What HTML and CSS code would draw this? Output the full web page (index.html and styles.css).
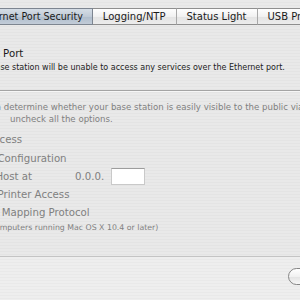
FILE: index.html
```html
<!DOCTYPE html>
<html lang="en">
<head>
  <meta charset="UTF-8">
  <meta name="viewport" content="width=device-width, initial-scale=1.0">
  <title>Base Station Settings</title>
  <link rel="stylesheet" href="styles.css">
</head>
<body>
  <div class="window">
    <div class="tabbar">
      <div class="tab tab-first selected">Ethernet Port Security</div>
      <div class="tab">Logging/NTP</div>
      <div class="tab">Status Light</div>
      <div class="tab">USB Printer</div>
    </div>

    <div class="panel">
      <section class="port">
        <h2 class="port-title">Ethernet Port</h2>
        <p class="note port-note">The base station will be unable to access any services over the Ethernet port.</p>
      </section>

      <div class="divider"></div>

      <section class="privacy disabled">
        <p class="note privacy-note">
          <span class="line">You can determine whether your base station is easily visible to the public via the Internet,</span>
          <span class="line line-cont">uncheck all the options.</span>
        </p>
        <ul class="options">
          <li class="option"><span class="check"></span><span class="label">Enable SNMP Access</span></li>
          <li class="option"><span class="check"></span><span class="label">Enable Remote Configuration</span></li>
          <li class="option"><span class="check"></span><span class="label">Enable Default Host at</span><span class="ip">0.0.0.</span><input class="field" type="text" disabled></li>
          <li class="option"><span class="check"></span><span class="label">Enable Remote Printer Access</span></li>
          <li class="option"><span class="check"></span><span class="label">Enable NAT Port Mapping Protocol</span></li>
        </ul>
        <p class="note mac-note">(Only for computers running Mac OS X 10.4 or later)</p>
      </section>
    </div>

    <div class="footer">
      <button class="push" type="button">Revert</button>
      <button class="push" type="button">Update</button>
    </div>
  </div>
</body>
</html>
```

FILE: styles.css
```css
:root {
  --stripe-light: #e9e9e9;
  --stripe-dark: #e4e4e4;
  --text: #1a1a1a;
  --text-disabled: #808080;
  --ui-font: "Lucida Grande", "DejaVu Sans", sans-serif;
}

body {
  margin: 0;
  font-family: var(--ui-font);
  color: var(--text);
}

.window {
  width: 300px;
  height: 300px;
  overflow: hidden;
  display: flex;
  flex-direction: column;
  background: repeating-linear-gradient(to bottom, var(--stripe-light) 0 2px, var(--stripe-dark) 2px 3px);
}

/* tabs */
.tabbar {
  display: flex;
  margin-top: 8px;
  margin-left: -32px;
  height: 17px;
  flex-shrink: 0;
}

.tab {
  box-sizing: border-box;
  height: 17px;
  padding: 0 10px;
  font-size: 10px;
  line-height: 15px;
  white-space: nowrap;
  border-top: 1px solid #8e8e8e;
  border-bottom: 1px solid #8e8e8e;
  border-right: 1px solid #a8a8a8;
  background: linear-gradient(to bottom, #fefefe, #f1f1f1 50%, #e3e3e3 51%, #ececec);
}

.tab-first {
  padding: 0 9px;
  font-size: 9.6px;
}

.tab.selected {
  background: linear-gradient(to bottom, #d5dde6, #c0cad6 50%, #aebccb 51%, #c2ccd8);
  border-color: #7d8590;
}

/* panel */
.panel {
  height: 232px;
  box-sizing: border-box;
  padding-top: 20.5px;
  border-bottom: 1px solid #c4c4c4;
  flex-shrink: 0;
}

.port-title {
  margin: 0 0 0 -44px;
  font-size: 10.2px;
  font-weight: normal;
  line-height: 16px;
  white-space: nowrap;
}

.note {
  margin: 0;
  font-size: 8px;
  line-height: 12px;
  white-space: nowrap;
}

.port-note {
  margin-left: -27px;
  color: #222;
}

.divider {
  margin-top: 16.5px;
  border-top: 1px solid #a4a4a4;
  border-bottom: 1px solid #f6f6f6;
}

.disabled {
  color: var(--text-disabled);
}

.privacy-note {
  margin-top: 9.3px;
  margin-left: -32px;
  font-size: 8.6px;
}

.privacy-note .line {
  display: block;
}

.privacy-note .line-cont {
  margin-left: 42px;
}

.options {
  list-style: none;
  margin: 5.5px 0 0 -102px;
  padding: 0;
}

.option {
  display: flex;
  align-items: center;
  height: 18.25px;
  font-size: 10.2px;
  white-space: nowrap;
}

.check {
  width: 12px;
  height: 12px;
  margin-right: 7px;
  box-sizing: border-box;
  border: 1px solid #b0b0b0;
  border-radius: 2px;
  background: #f7f7f7;
}

.ip {
  margin-left: 43px;
}

.field {
  width: 34px;
  height: 17px;
  margin: 0 0 0 7px;
  padding: 0;
  box-sizing: border-box;
  border: 1px solid #c9c9c9;
  border-top-color: #9d9d9d;
  background: #fff;
}

.mac-note {
  margin-left: -46px;
  font-size: 7.8px;
}

/* footer */
.footer {
  flex: 1;
  display: flex;
  gap: 8px;
  padding: 11px 0 0 288px;
  align-items: flex-start;
  background: repeating-linear-gradient(to bottom, #eeeeee 0 2px, #e9e9e9 2px 3px);
}

.push {
  flex-shrink: 0;
  width: 64px;
  height: 17px;
  padding: 0;
  border-radius: 9px;
  border: 1px solid #858585;
  background: linear-gradient(to bottom, #ffffff, #f1f1f1 50%, #e2e2e2 51%, #f7f7f7);
  font-family: var(--ui-font);
  font-size: 10px;
  color: #111;
}
```
